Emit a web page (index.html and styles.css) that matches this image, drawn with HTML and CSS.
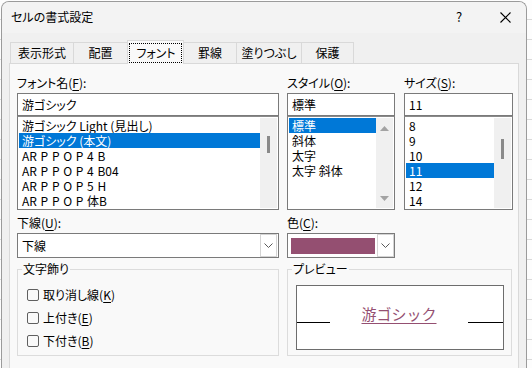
FILE: index.html
```html
<!DOCTYPE html>
<html lang="ja">
<head>
<meta charset="utf-8">
<title>セルの書式設定</title>
<link rel="stylesheet" href="styles.css">
</head>
<body>
<div class="window">
  <div class="titlebar">
    <span class="title">セルの書式設定</span>
    <span class="help">?</span>
    <svg class="close" width="11" height="11" viewBox="0 0 11 11"><path d="M0.5 0.5 L10.5 10.5 M10.5 0.5 L0.5 10.5" stroke="#000" stroke-width="1.1" fill="none"/></svg>
  </div>
  <div class="body">
    <div class="tabs">
      <div class="tab">表示形式</div>
      <div class="tab">配置</div>
      <div class="tab active"><span class="focus">フォント</span></div>
      <div class="tab">罫線</div>
      <div class="tab">塗りつぶし</div>
      <div class="tab">保護</div>
    </div>
    <div class="panel">
      <div class="grid">
        <div class="field c-font">
          <div class="lbl">フォント名(<u>F</u>):</div>
          <div class="input">游ゴシック</div>
          <div class="list">
            <div class="items">
              <div class="item">游ゴシック Light (見出し)</div>
              <div class="item sel">游ゴシック (本文)</div>
              <div class="item spaced">AR P P O P 4 B</div>
              <div class="item spaced">AR P P O P 4 B04</div>
              <div class="item spaced">AR P P O P 5 H</div>
              <div class="item spaced">AR P P O P 体B</div>
            </div>
            <div class="sb"><div class="thumb thumb-font"></div></div>
          </div>
        </div>
        <div class="field c-style">
          <div class="lbl">スタイル(<u>O</u>):</div>
          <div class="input">標準</div>
          <div class="list">
            <div class="items">
              <div class="item sel">標準</div>
              <div class="item">斜体</div>
              <div class="item">太字</div>
              <div class="item">太字 斜体</div>
            </div>
            <div class="sb sb-arrows">
              <svg width="9" height="5" viewBox="0 0 9 5"><path d="M0 5 L4.5 0 L9 5 Z" fill="#a3a3a3"/></svg>
              <svg width="9" height="5" viewBox="0 0 9 5"><path d="M0 0 L4.5 5 L9 0 Z" fill="#a3a3a3"/></svg>
            </div>
          </div>
        </div>
        <div class="field c-size">
          <div class="lbl">サイズ(<u>S</u>):</div>
          <div class="input">11</div>
          <div class="list">
            <div class="items">
              <div class="item">8</div>
              <div class="item">9</div>
              <div class="item">10</div>
              <div class="item sel">11</div>
              <div class="item">12</div>
              <div class="item">14</div>
            </div>
            <div class="sb"><div class="thumb thumb-size"></div></div>
          </div>
        </div>

        <div class="field c-under">
          <div class="lbl lbl2">下線(<u>U</u>):</div>
          <div class="select">
            <div class="select-text">下線</div>
            <div class="dd"><svg width="9" height="5" viewBox="0 0 9 5"><path d="M0.5 0.5 L4.5 4.5 L8.5 0.5" stroke="#5a5a5a" fill="none"/></svg></div>
          </div>
        </div>
        <div class="field c-color">
          <div class="lbl lbl2">色(<u>C</u>):</div>
          <div class="select">
            <div class="swatch"></div>
            <div class="dd dd-color"><svg width="9" height="5" viewBox="0 0 9 5"><path d="M0.5 0.5 L4.5 4.5 L8.5 0.5" stroke="#5a5a5a" fill="none"/></svg></div>
          </div>
        </div>

        <fieldset class="group c-deco">
          <legend>文字飾り</legend>
          <div class="checks">
            <div class="check"><span class="cb"></span><span>取り消し線(<u>K</u>)</span></div>
            <div class="check"><span class="cb"></span><span>上付き(<u>E</u>)</span></div>
            <div class="check"><span class="cb"></span><span>下付き(<u>B</u>)</span></div>
          </div>
        </fieldset>
        <fieldset class="group c-prev">
          <legend>プレビュー</legend>
          <div class="pbox">
            <div class="pline"></div>
            <div class="ptext">游ゴシック</div>
            <div class="pline"></div>
          </div>
        </fieldset>
      </div>
    </div>
  </div>
</div>
</body>
</html>
```

FILE: styles.css
```css
* {
  box-sizing: border-box;
  margin: 0;
  padding: 0;
}

html, body {
  margin: 0;
}

body {
  width: 532px;
  height: 368px;
  overflow: hidden;
  padding: 1px 0 0 1px;
  background-color: #fdfdfd;
  background-image: repeating-linear-gradient(to bottom, transparent 0 19px, #dadada 19px 20px);
  font-family: "Noto Sans CJK JP", "Noto Sans", sans-serif;
  font-size: 12px;
  color: #000;
  font-feature-settings: "palt";
}

u {
  text-underline-offset: 2px;
}

.window {
  width: 526px;
  height: 380px;
  border: 1px solid #9b9b9b;
  border-bottom: 0;
  border-radius: 8px 8px 0 0;
  background: #f0f0f0;
  overflow: hidden;
}

.titlebar {
  height: 31px;
  display: flex;
  align-items: center;
  padding: 0 0 1px 9px;
  background: #f3f3f3;
}

.title {
  flex: 1;
  line-height: 16px;
}

.help {
  width: 8px;
  margin-right: 36px;
  font-size: 13px;
  line-height: 16px;
}

.close {
  margin-right: 15px;
}

.body {
  padding: 7px 7px 0 7px;
}

.tabs {
  display: flex;
  align-items: flex-end;
  height: 23px;
  padding-left: 1px;
}

.tab {
  height: 21px;
  border: 1px solid #d9d9d9;
  border-bottom: 0;
  margin-right: -1px;
  display: flex;
  align-items: center;
  justify-content: center;
  background: #f0f0f0;
  line-height: 16px;
}

.tab:nth-child(1) { width: 64px; }
.tab:nth-child(2) { width: 55px; }
.tab:nth-child(3) { width: 57px; }
.tab:nth-child(4) { width: 54px; }
.tab:nth-child(5) { width: 66px; }
.tab:nth-child(6) { width: 53px; }

.tab.active {
  height: 24px;
  margin-bottom: -1px;
  background: #f9f9f9;
  position: relative;
  z-index: 1;
}

.focus {
  outline: 1px dotted #000;
  padding: 1px 5px 1px 6px;
}

.panel {
  height: 320px;
  background: #f9f9f9;
  border: 1px solid #d9d9d9;
  padding: 11px 5px 0 7px;
}

.grid {
  display: grid;
  grid-template-columns: 262px 8px 108px 9px 109px;
  row-gap: 5px;
}

.c-font, .c-under, .c-deco { grid-column: 1; }
.c-style, .c-color { grid-column: 3; }
.c-size { grid-column: 5; }
.c-prev { grid-column: 3 / 6; margin-right: 1px; }

.field {
  display: flex;
  flex-direction: column;
}

.lbl {
  line-height: 16px;
  margin-bottom: 2px;
}

.input {
  height: 23px;
  border: 1px solid #7a7a7a;
  background: #fff;
  padding-left: 4px;
  line-height: 21px;
}

.list {
  height: 94px;
  border: 1px solid #7a7a7a;
  border-top-color: #8a8a8a;
  background: #fff;
  display: flex;
}

.items {
  flex: 1;
  padding: 1px 0 1px 1px;
  min-width: 0;
}

.item {
  height: 15px;
  line-height: 15px;
  padding-left: 3px;
  white-space: nowrap;
  overflow: hidden;
}

.item.spaced {
  word-spacing: 1px;
}

.item.sel {
  background: #0078d7;
  color: #fff;
}

.sb {
  width: 17px;
  margin: 1px 1px 1px 0;
  background: #f0f0f0;
}

.thumb {
  width: 3px;
  margin-left: 7px;
  background: #8a8a8a;
}

.thumb-font {
  margin-top: 18px;
  height: 17px;
}

.thumb-size {
  margin-top: 21px;
  height: 20px;
}

.sb-arrows {
  display: flex;
  flex-direction: column;
  align-items: center;
  justify-content: space-between;
  padding: 8px 0 7px 0;
}

.select {
  height: 25px;
  border: 1px solid #7a7a7a;
  background: #fff;
  display: flex;
}

.select-text {
  flex: 1;
  padding-left: 4px;
  line-height: 23px;
}

.dd {
  width: 17px;
  margin: 0 1px 0 0;
  border: 1px solid #d4d4d4;
  background: #fff;
  display: flex;
  align-items: center;
  justify-content: center;
}

.dd-color {
  margin-right: 0;
}

.swatch {
  width: 84px;
  height: 16px;
  margin: 4px 2px 3px 3px;
  background: #944f71;
}

.group {
  border: 1px solid #dcdcdc;
  height: 95px;
  margin-top: -2px;
  padding: 0;
  min-width: 0;
}

.group legend {
  margin-left: 4px;
  padding: 0 1px;
  line-height: 16px;
}

.checks {
  display: flex;
  flex-direction: column;
  padding: 6px 0 0 9px;
}

.check {
  height: 23px;
  display: flex;
  align-items: center;
  gap: 4px;
  line-height: 16px;
}

.cb {
  width: 12px;
  height: 12px;
  border: 1px solid #5f5f5f;
  border-radius: 2px;
  background: #f9f9f9;
}

.pbox {
  margin: 8px 7px 0 8px;
  height: 65px;
  border: 1px solid #6d6d6d;
  background: #fff;
  display: grid;
  grid-template-columns: 33px 1fr 35px;
  align-items: start;
}

.pline {
  height: 1px;
  margin-top: 36px;
  background: #000;
}

.ptext {
  justify-self: center;
  margin-top: 18px;
  font-size: 15px;
  line-height: 20px;
  color: #944f71;
  font-feature-settings: normal;
  text-decoration: underline;
  text-decoration-color: #944f71;
  text-underline-offset: 3px;
}
```
